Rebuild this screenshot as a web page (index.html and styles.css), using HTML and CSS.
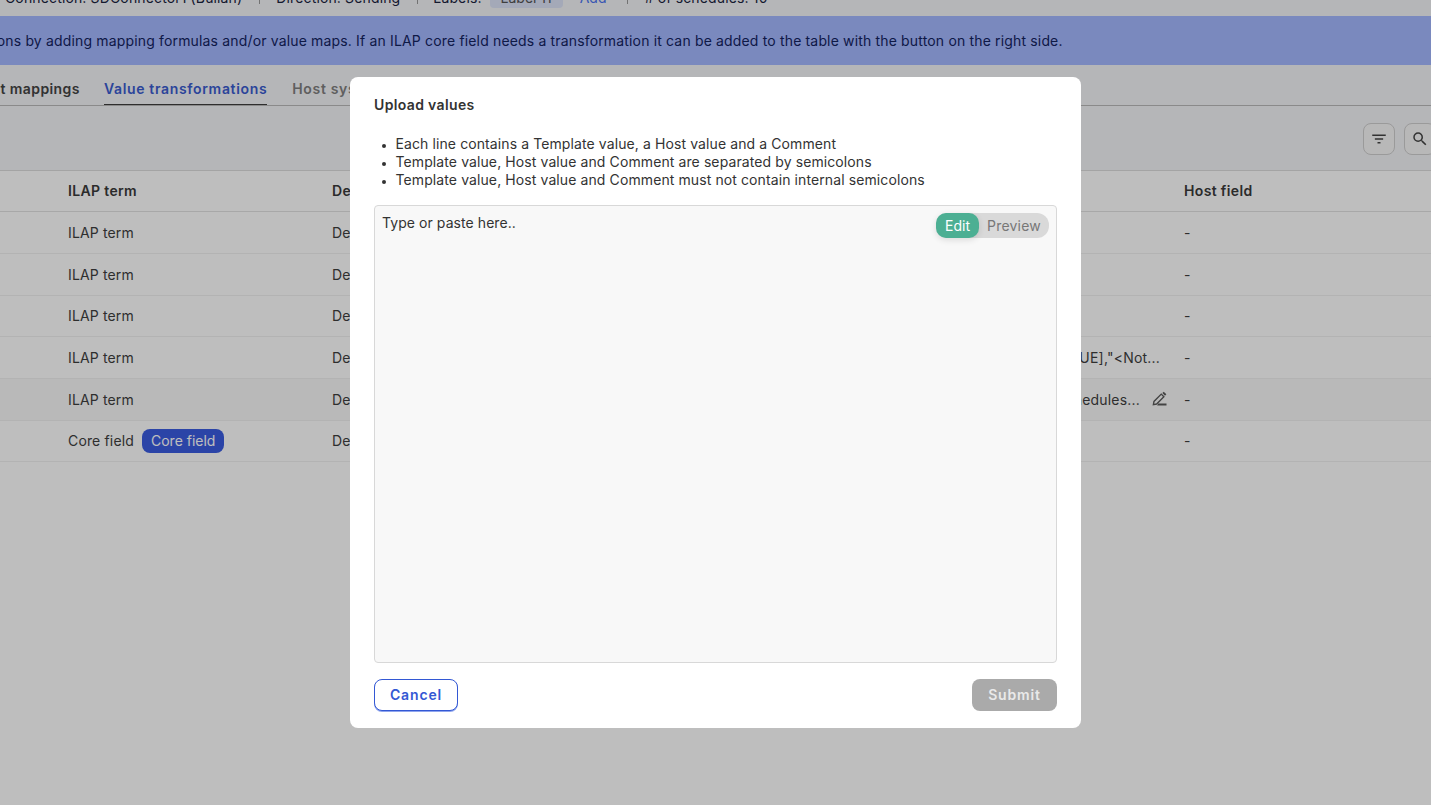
FILE: index.html
```html
<!DOCTYPE html>
<html lang="en">
<head>
<meta charset="utf-8">
<title>Value transformations</title>
<link rel="stylesheet" href="styles.css">
</head>
<body>
<div class="page">
  <div class="meta-strip">
    <div class="meta-row">
      <span class="meta-item">Connection: SDConnector1 (Bullan)</span>
      <span class="meta-sep"></span>
      <span class="meta-item">Direction: Sending</span>
      <span class="meta-sep"></span>
      <span class="meta-item meta-labels">Labels:</span>
      <span class="meta-tag">Label 11</span>
      <span class="meta-add">Add</span>
      <span class="meta-sep"></span>
      <span class="meta-item"># of schedules: 10</span>
    </div>
  </div>
  <div class="banner"><p class="banner-text">Define value transformations by adding mapping formulas and/or value maps. If an ILAP core field needs a transformation it can be added to the table with the button on the right side.</p></div>
  <nav class="tabs">
    <span class="tab tab-dark">Input mappings</span>
    <span class="tab tab-active">Value transformations</span>
    <span class="tab">Host system</span>
  </nav>
  <div class="toolbar">
    <button class="tool-btn" aria-label="Filter">
      <svg width="18" height="18" viewBox="0 0 24 24"><path d="M3 6h18v2H3zM6.500 11h11v2h-11zM10 16h4v2h-4z"/></svg>
    </button>
    <button class="tool-btn" aria-label="Search">
      <svg width="18" height="18" viewBox="0 0 24 24"><path d="M15.500 14h-.79l-.28-.27A6.471 6.471 0 0 0 16 9.500 6.500 6.500 0 1 0 9.500 16c1.610 0 3.090-.59 4.230-1.570l.27.28v.79l5 4.990L20.490 19l-4.990-5zm-6 0C7.010 14 5 11.990 5 9.500S7.010 5 9.500 5 14 7.010 14 9.500 11.990 14 9.500 14z"/></svg>
    </button>
  </div>
  <div class="table">
    <div class="row row-head">
      <span class="cell">ILAP term</span><span class="cell">Description</span><span class="cell"></span><span class="cell">Host field</span>
    </div>
    <div class="row"><span class="cell">ILAP term</span><span class="cell">Description</span><span class="cell"></span><span class="cell">-</span></div>
    <div class="row"><span class="cell">ILAP term</span><span class="cell">Description</span><span class="cell"></span><span class="cell">-</span></div>
    <div class="row"><span class="cell">ILAP term</span><span class="cell">Description</span><span class="cell"></span><span class="cell">-</span></div>
    <div class="row"><span class="cell">ILAP term</span><span class="cell">Description</span><span class="cell cell-formula">IF([VALUE],"&lt;Not...</span><span class="cell">-</span></div>
    <div class="row row-hover"><span class="cell">ILAP term</span><span class="cell">Description</span><span class="cell cell-formula cell-edit">Schedules...
      <svg class="edit-icon" width="18" height="18" viewBox="0 0 24 24"><path class="edit-body" d="M4.500 19.500l.8-4.300L15 5.500l3.500 3.500-9.700 9.700z"/><path class="edit-fill" d="M16.500 4l1.800-1.800 3.500 3.500L20 7.500zM11 18h11v2.800H9.500z"/></svg>
    </span><span class="cell">-</span></div>
    <div class="row"><span class="cell">Core field<span class="chip">Core field</span></span><span class="cell">Description</span><span class="cell"></span><span class="cell">-</span></div>
  </div>
</div>

<div class="overlay">
  <section class="modal">
    <h2 class="modal-title">Upload values</h2>
    <ul class="rules">
      <li>Each line contains a Template value, a Host value and a Comment</li>
      <li>Template value, Host value and Comment are separated by semicolons</li>
      <li>Template value, Host value and Comment must not contain internal semicolons</li>
    </ul>
    <div class="editor">
      <span class="placeholder">Type or paste here..</span>
      <div class="toggle">
        <span class="toggle-on">Edit</span>
        <span class="toggle-off">Preview</span>
      </div>
    </div>
    <div class="actions">
      <button class="btn btn-cancel">Cancel</button>
      <button class="btn btn-submit">Submit</button>
    </div>
  </section>
</div>
</body>
</html>
```
FILE: styles.css
```css
* { box-sizing: border-box; }
html, body { margin: 0; height: 100%; overflow: hidden; }
body { background: #fff; color: #3e3e3e; font-family: Inter, "Liberation Sans", sans-serif; font-size: 14px; }
.page { display: flex; flex-direction: column; height: 805px; overflow: hidden; }

.meta-strip { height: 16px; background: #f3f4f7; overflow: hidden; flex: none; }
.meta-row { display: flex; align-items: flex-end; height: 8px; margin-left: 5px; white-space: nowrap; color: #1a2340; }
.meta-item { line-height: 20px; letter-spacing: .14px; flex: none; }
.meta-labels { margin-left: -1px; }
.meta-sep { width: 1px; height: 12px; background: #9a9a9a; margin: -8px 16.500px 0; align-self: flex-start; flex: none; }
.meta-tag { flex: none; margin-left: 8px; background: #dce3f7; border-radius: 4px; width: 73px; text-align: center; line-height: 20px; color: #555; }
.meta-add { flex: none; margin: 0 -1px 0 17px; color: #4d74f0; width: 32px; line-height: 20px; }

.banner { height: 49px; background: #a4b8ff; display: flex; align-items: center; overflow: hidden; flex: none; }
.banner-text { margin: 0 0 0 -174px; white-space: nowrap; color: #14235f; letter-spacing: .16px; }

.tabs { height: 41px; background: #f3f4f7; border-bottom: 1px solid #b9b9b9; display: flex; gap: 25px; flex: none; overflow: hidden; }
.tab { font-weight: 600; letter-spacing: .66px; white-space: nowrap; height: 41px; line-height: 47px; color: #808080; }
.tab-dark { color: #444; margin: 0 -1px 0 -31px; letter-spacing: .42px; }
.tab-active { color: #3a5ccf; border-bottom: 2px solid #3e3e3e; }

.toolbar { height: 65px; background: #f3f4f7; border-bottom: 1px solid #dddddd; display: flex; justify-content: flex-end; gap: 9px; padding-top: 17px; margin-right: -5px; flex: none; }
.tool-btn { width: 32px; height: 32px; padding: 0; background: #f7f7f7; border: 1px solid #cfcfcf; border-radius: 8px; display: flex; align-items: center; justify-content: center; fill: #444; }

.table { background: #fff; flex: 1; letter-spacing: .15px; }
.row { display: grid; grid-template-columns: 332px 500px 352px 1fr; height: 41.670px; align-items: center; border-bottom: 1px solid #f0f0f0; }
.row-head { font-weight: 600; color: #3a3a3a; letter-spacing: .35px; height: 41.300px; padding-bottom: 2px; border-bottom-color: #e2e2e2; }
.row-hover { background: #f9f9f9; }
.cell { padding-left: 68px; white-space: nowrap; display: flex; align-items: center; overflow: hidden; }
.cell:nth-child(2) { padding-left: 0; }
.cell:nth-child(3) { padding-left: 0; justify-content: flex-end; padding-right: 24px; }
.cell:nth-child(4) { padding-left: 0; }
.cell-formula { letter-spacing: .2px; }
.cell:nth-child(3).cell-edit { padding-right: 16px; }
.edit-icon { margin-left: 10px; flex: none; }
.edit-body { fill: none; stroke: #5a5a5a; stroke-width: 1.800; }
.edit-fill { fill: #5a5a5a; }
.chip { background: #3a5ce0; color: #fff; border-radius: 8px; height: 24px; line-height: 24px; padding: 0 9px; margin-left: 8px; letter-spacing: 0; }

.overlay { position: fixed; inset: 0; background: rgba(0, 0, 0, .255); }
.modal { position: absolute; left: 350px; top: 77px; width: 731px; height: 651px; background: #fff; border-radius: 8px; padding: 20px 24px 17px; display: flex; flex-direction: column; color: #333; }
.modal-title { margin: 0; font-size: 14px; line-height: 16px; font-weight: 600; letter-spacing: .35px; }
.rules { margin: 22px 0 0; padding-left: 21.500px; line-height: 18px; color: #333; letter-spacing: .1px; flex: none; }
.rules li::marker { font-size: 11px; }
.editor { flex: 1; margin-top: 16px; background: #f8f8f8; border: 1px solid #d8d8d8; border-radius: 4px; padding: 7px; display: flex; justify-content: space-between; align-items: flex-start; }
.placeholder { line-height: 20px; letter-spacing: .07px; }
.toggle { display: flex; height: 25px; background: #d9d9d9; border-radius: 12px; color: #777; line-height: 25px; }
.toggle-on { background: #4caf93; color: #fff; width: 43px; text-align: center; border-radius: 10px; box-shadow: 0 2px 6px rgba(0,0,0,.12); }
.toggle-off { width: 70px; text-align: center; letter-spacing: .2px; }
.actions { display: flex; justify-content: space-between; margin-top: 16px; }
.btn { height: 32px; border-radius: 8px; font-family: Inter, "Liberation Sans", sans-serif; font-size: 14px; font-weight: 600; letter-spacing: .85px; padding: 0 0 2px; }
.btn-cancel { width: 84px; background: #fff; border: 1px solid #3358d4; color: #3358d4; box-shadow: 0 1px 0 #8fa5ee; }
.btn-submit { width: 85px; background: #aaaaaa; border: 0; color: #e9e9e9; }
```
